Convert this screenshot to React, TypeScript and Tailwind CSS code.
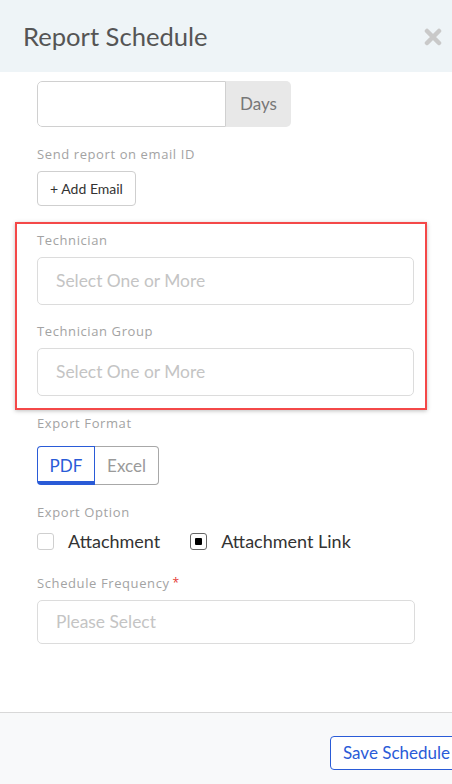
import React from 'react';

const font = { fontFamily: 'Lato, "Noto Sans", sans-serif' };

function Label({ children, required }: { children: React.ReactNode; required?: boolean }) {
  return (
    <div className="font-['Open_Sans',sans-serif] text-[13px] leading-[18px] tracking-[0.6px] text-[#a3a3a3]">
      {children}
      {required && <span className="ml-[3px] align-top text-[12px] text-[#e53935]">*</span>}
    </div>
  );
}

function SelectBox({ placeholder, h = 'h-[48px]' }: { placeholder: string; h?: string }) {
  return (
    <div className={`${h} flex items-center rounded-[5px] border border-[#dcdcdc] bg-white pl-[18px] text-[17.4px] text-[#c4c4c4]`}>
      {placeholder}
    </div>
  );
}

export default function App() {
  return (
    <div className="relative h-[784px] w-[452px] overflow-hidden bg-white" style={font}>
      <div className="flex h-full flex-col">
        {/* Header */}
        <div className="flex h-[72px] shrink-0 items-center justify-between bg-[#eef4f7] pl-[23px] pr-[10px]">
          <h1 className="text-[25.6px] font-normal text-[#555]">Report Schedule</h1>
          <svg width="18" height="18" viewBox="0 0 18 18" className="mt-[1px]">
            <path d="M3 3 L15 15 M15 3 L3 15" stroke="#c9c9c9" strokeWidth="4.5" strokeLinecap="round" />
          </svg>
        </div>

        {/* Body */}
        <div className="flex-1 px-[37px] pt-[9px]">
          <div className="flex h-[46px] w-[254px] overflow-hidden rounded-[5px]">
            <div className="flex-1 rounded-l-[5px] border border-[#d0d0d0]" />
            <div className="flex w-[65px] items-center justify-center bg-[#e8e8e8] text-[17px] text-[#777]">Days</div>
          </div>

          <div className="mt-[18px]">
            <Label>Send report on email ID</Label>
          </div>
          <button className="mt-[8px] h-[35px] w-[99px] rounded-[4px] border border-[#cfcfcf] bg-white text-[14px] text-[#333]">
            + Add Email
          </button>

          {/* highlighted group */}
          <div className="-ml-[22px] -mr-[12px] mt-[16px] border-2 border-[#f44848] pb-[12px] pl-[20px] pr-[11px] pt-[7px] shadow-[0_1px_4px_rgba(0,0,0,0.25)]">
            <Label>Technician</Label>
            <div className="mt-[8px]">
              <SelectBox placeholder="Select One or More" />
            </div>
            <div className="mt-[17px]">
              <Label>Technician Group</Label>
            </div>
            <div className="mt-[8px]">
              <SelectBox placeholder="Select One or More" />
            </div>
          </div>

          <div className="mt-[4px]">
            <Label>Export Format</Label>
          </div>
          <div className="mt-[14px] flex h-[39px] w-[122px]">
            <div className="flex w-[58px] items-center justify-center rounded-l-[4px] border border-b-[4px] border-[#2a5bd7] pt-[3px] text-[17px] text-[#2a5bd7]">
              PDF
            </div>
            <div className="flex flex-1 items-center justify-center rounded-r-[4px] border border-l-0 border-[#a8a8a8] text-[17px] text-[#9a9a9a]">
              Excel
            </div>
          </div>

          <div className="mt-[18px]">
            <Label>Export Option</Label>
          </div>
          <div className="mt-[8px] flex h-[24px] items-center text-[18px] text-[#333]">
            <span className="h-[17px] w-[17px] rounded-[3px] border border-[#cfcfcf]" />
            <span className="ml-[14px]">Attachment</span>
            <span className="ml-[30px] flex h-[17px] w-[17px] items-center justify-center rounded-[3px] border border-[#666]">
              <span className="h-[7px] w-[7px] rounded-[1px] bg-black" />
            </span>
            <span className="ml-[14px]">Attachment Link</span>
          </div>

          <div className="mt-[21px]">
            <Label required>Schedule Frequency</Label>
          </div>
          <div className="mt-[8px]">
            <SelectBox placeholder="Please Select" h="h-[44px]" />
          </div>
        </div>

        {/* Footer */}
        <div className="h-[72px] shrink-0 border-t border-[#d8d8d8] bg-[#f8f9fa] pt-[23px]">
          <button className="ml-[330px] h-[34px] whitespace-nowrap rounded-[4px] border border-[#2a5bd7] bg-white px-[12px] text-[17px] text-[#2a5bd7]">
            Save Schedule
          </button>
        </div>
      </div>
    </div>
  );
}
